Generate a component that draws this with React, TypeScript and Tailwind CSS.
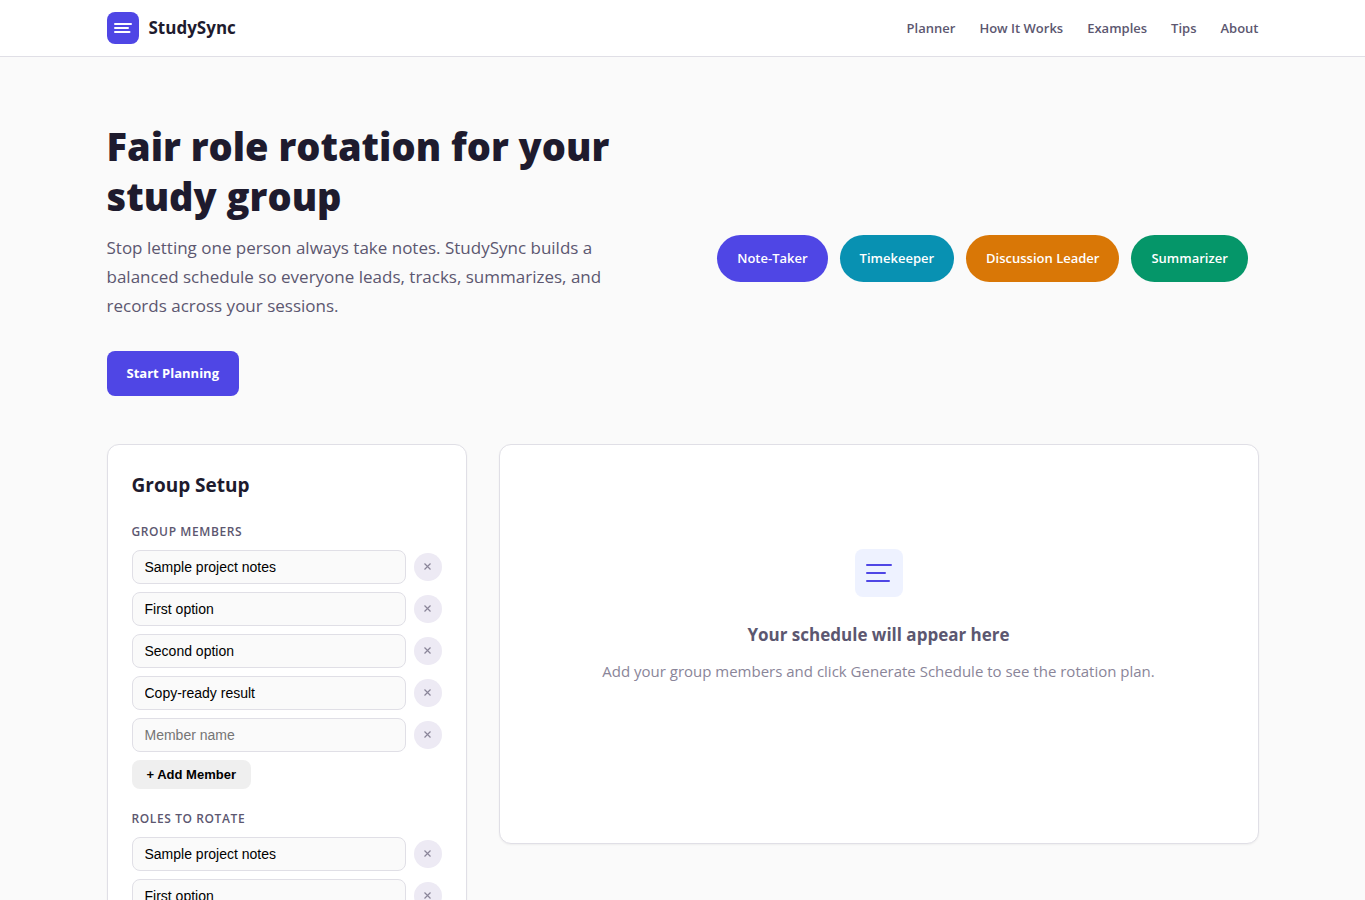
import React, { useState } from "react";
import { clsx } from "clsx";

const navLinks = [
  { label: "Planner", href: "#planner" },
  { label: "How It Works", href: "#how-it-works" },
  { label: "Examples", href: "#examples" },
  { label: "Tips", href: "#tips" },
  { label: "About", href: "#about" },
];

const rolePills = [
  { label: "Note-Taker", color: "bg-[#4f46e5]" },
  { label: "Timekeeper", color: "bg-[#0891b2]" },
  { label: "Discussion Leader", color: "bg-[#d97706]" },
  { label: "Summarizer", color: "bg-[#059669]" },
];

const Logo = () => (
  <svg className="w-8 h-8" viewBox="0 0 32 32" fill="none" aria-hidden="true">
    <rect width="32" height="32" rx="8" fill="#4f46e5" />
    <path d="M8 12h16M8 16h13M8 20h14.5" stroke="#fff" strokeWidth="2" strokeLinecap="round" />
  </svg>
);

const EmptyIcon = () => (
  <svg className="w-12 h-12" viewBox="0 0 48 48" fill="none" aria-hidden="true">
    <rect width="48" height="48" rx="8" fill="#eef2ff" />
    <path d="M12 16h24M12 24h18M12 32h22" stroke="#4f46e5" strokeWidth="2" strokeLinecap="round" />
  </svg>
);

interface FieldListProps {
  title: string;
  placeholder: string;
  initial: string[];
  addLabel?: string;
}

const FieldList = ({ title, placeholder, initial, addLabel }: FieldListProps) => {
  const [items, setItems] = useState(initial);

  const update = (index: number, value: string) =>
    setItems(items.map((item, i) => (i === index ? value : item)));

  return (
    <fieldset className="mb-5">
      <legend className="mb-2 text-xs leading-5 font-semibold uppercase tracking-wider text-[#5c5770]">{title}</legend>
      <div className="flex flex-col gap-2">
        {items.map((item, i) => (
          <div key={i} className="flex items-center gap-2">
            <input
              type="text"
              value={item}
              placeholder={placeholder}
              aria-label={`${placeholder} ${i + 1}`}
              onChange={(e) => update(i, e.target.value)}
              className="flex-1 min-w-0 h-[34px] px-3 rounded-lg border border-[#e0dfe6] bg-[#fafafa] font-['Liberation_Sans',sans-serif] text-sm text-black placeholder:text-[#757575]"
            />
            <button
              type="button"
              aria-label="Remove"
              onClick={() => setItems(items.filter((_, n) => n !== i))}
              className="w-7 h-7 shrink-0 rounded-full bg-[#edeaf4] text-[#8a8599] flex items-center justify-center"
            >
              <svg className="w-2 h-2" viewBox="0 0 8 8" stroke="currentColor" strokeWidth="1.2">
                <path d="M0.5 0.5l6 6M6.5 0.5l-6 6" />
              </svg>
            </button>
          </div>
        ))}
      </div>
      {addLabel && (
        <button
          type="button"
          onClick={() => setItems([...items, ""])}
          className="mt-2 h-[29px] px-[15px] rounded-lg bg-[#efefef] font-['Liberation_Sans',sans-serif] text-[13px] font-bold text-black"
        >
          {addLabel}
        </button>
      )}
    </fieldset>
  );
};

const App = () => {
  return (
    <div className="min-h-screen bg-[#fafafa] font-['Open_Sans',sans-serif] text-[#1e1b2e]">
      {/* Header */}
      <header className="bg-white border-b border-[#e0dfe6]">
        <div className="max-w-[1200px] mx-auto h-14 px-6 flex items-center justify-between">
          <a href="#" className="flex items-center gap-[10px] text-[17px] font-bold">
            <Logo />
            StudySync
          </a>
          <nav className="flex gap-6">
            {navLinks.map((link) => (
              <a key={link.label} href={link.href} className="text-[13px] leading-5 font-semibold text-[#5c5770]">
                {link.label}
              </a>
            ))}
          </nav>
        </div>
      </header>

      <main className="max-w-[1200px] mx-auto px-6">
        {/* Hero */}
        <section className="grid grid-cols-2 gap-12 items-center pt-16 pb-12">
          <div>
            <h1 className="mb-3 text-[38px] leading-[50px] font-extrabold">Fair role rotation for your study group</h1>
            <p className="mb-[31px] text-[17px] leading-[29px] text-[#5c5770]">
              Stop letting one person always take notes. StudySync builds a balanced schedule so everyone leads, tracks,
              summarizes, and records across your sessions.
            </p>
            <a
              href="#planner"
              className="inline-flex items-center h-[45px] px-5 rounded-lg bg-[#4f46e5] text-[13px] font-bold text-white"
            >
              Start Planning
            </a>
          </div>
          <ul className="flex flex-wrap justify-center gap-3">
            {rolePills.map((role) => (
              <li
                key={role.label}
                className={clsx("px-5 py-3 rounded-full text-[13px] leading-[23px] font-semibold text-white", role.color)}
              >
                {role.label}
              </li>
            ))}
          </ul>
        </section>

        {/* Planner */}
        <section id="planner" className="grid grid-cols-[360px_1fr] gap-8 items-start pb-16">
          <form className="p-6 rounded-xl border border-[#e0dfe6] bg-white shadow-xs">
            <h2 className="mb-5 text-[19px] leading-[33px] font-bold">Group Setup</h2>
            <FieldList
              title="Group Members"
              placeholder="Member name"
              initial={["Sample project notes", "First option", "Second option", "Copy-ready result", ""]}
              addLabel="+ Add Member"
            />
            <FieldList title="Roles to Rotate" placeholder="Role name" initial={["Sample project notes", "First option"]} />
          </form>

          <div className="min-h-[400px] px-6 pt-26 pb-6 rounded-xl border border-[#e0dfe6] bg-white shadow-xs flex flex-col items-center text-center">
            <EmptyIcon />
            <h3 className="mt-6 mb-2 text-[17px] leading-7 font-bold text-[#5c5770]">Your schedule will appear here</h3>
            <p className="text-[15px] leading-7 text-[#8a8599]">
              Add your group members and click Generate Schedule to see the rotation plan.
            </p>
          </div>
        </section>
      </main>
    </div>
  );
};

export default App;
